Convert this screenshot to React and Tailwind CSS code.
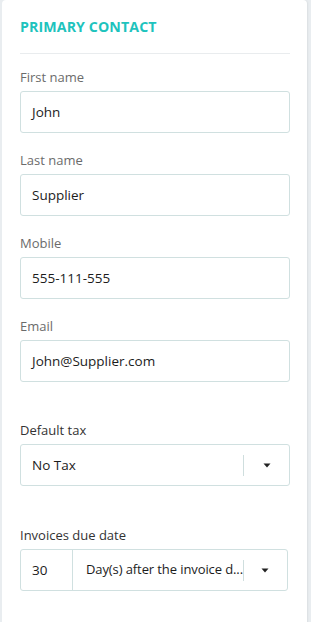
import React from "react";

const Label = ({ children, dark, className = "" }) => (
  <div
    className={`text-[13px] leading-[18px] mb-[5px] ${
      dark ? "text-[#333]" : "text-[#6b6b6b]"
    } ${className}`}
  >
    {children}
  </div>
);

const Arrow = () => (
  <svg width="8" height="5" viewBox="0 0 8 5" className="block">
    <path d="M0.5 0.5 L7.5 0.5 L4 4.5 Z" fill="#222" />
  </svg>
);

const TextField = ({ label, value, className = "" }) => (
  <div className={className}>
    <Label>{label}</Label>
    <div className="h-[42px] border border-[#d0e0e0] rounded-[3px] flex items-center px-[11px] text-[13.5px] text-[#1c1c1c]">
      {value}
    </div>
  </div>
);

export default function App() {
  const fields = [
    { label: "First name", value: "John" },
    { label: "Last name", value: "Supplier" },
    { label: "Mobile", value: "555-111-555" },
    { label: "Email", value: "John@Supplier.com" },
  ];

  return (
    <div
      className="w-[311px] h-[622px] overflow-hidden bg-[#e9edf0] pl-[2px]"
      style={{ fontFamily: '"Open Sans", sans-serif' }}
    >
      <div className="w-[305px] h-[640px] bg-white rounded-t-[4px] shadow-[1px_0_2px_rgba(0,0,0,0.06)] pt-[17px] pl-[18px] pr-[17px]">
        <h2 className="text-[14.2px] leading-[20px] font-bold text-[#1ec3bd] tracking-[0.1px]">
          PRIMARY CONTACT
        </h2>
        <div className="mt-[16px] border-t border-[#e9ecee]" />

        <div className="mt-[14px]">
          {fields.map((f, i) => (
            <TextField
              key={f.label}
              label={f.label}
              value={f.value}
              className={i > 0 ? "mt-[18px]" : ""}
            />
          ))}
        </div>

        <div className="mt-[39px]">
          <Label dark>Default tax</Label>
          <div className="h-[42px] border border-[#d0e0e0] rounded-[3px] flex items-center pl-[11px] text-[13.5px] text-[#1c1c1c]">
            <span className="flex-1">No Tax</span>
            <div className="w-px h-[21px] bg-[#cfdede]" />
            <div className="w-[45px] flex justify-center">
              <Arrow />
            </div>
          </div>
        </div>

        <div className="mt-[40px]">
          <Label dark>Invoices due date</Label>
          <div className="w-[268px] h-[42px] border border-[#d0e0e0] rounded-[3px] flex text-[13.5px] text-[#1c1c1c]">
            <div className="w-[52px] flex items-center pl-[11px] border-r border-[#d0e0e0]">
              30
            </div>
            <div className="flex-1 flex items-center pl-[13px] min-w-0">
              <span className="flex-1 whitespace-nowrap text-[13px] tracking-[-0.1px]">
                Day(s) after the invoice d...
              </span>
              <div className="w-px h-[21px] bg-[#cfdede]" />
              <div className="w-[44px] flex justify-center">
                <Arrow />
              </div>
            </div>
          </div>
        </div>
      </div>
    </div>
  );
}
